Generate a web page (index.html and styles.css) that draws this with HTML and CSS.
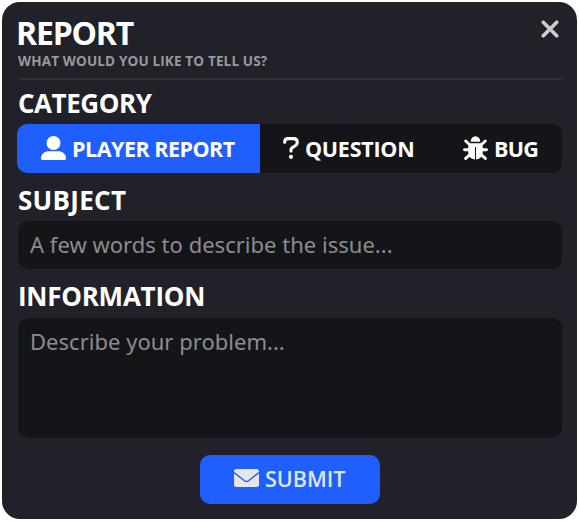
FILE: index.html
```html
<!DOCTYPE html>
<html lang="en">
<head>
<meta charset="utf-8">
<title>Report</title>
<link rel="stylesheet" href="styles.css">
</head>
<body>
<main class="card">
  <header class="header">
    <div>
      <h1 class="title">REPORT</h1>
      <p class="subtitle">WHAT WOULD YOU LIKE TO TELL US?</p>
    </div>
    <button class="close" aria-label="Close"><svg width="18" height="18" viewBox="0 0 18 18"><path d="M2.3 2.3L15.7 15.7M15.7 2.3L2.3 15.7" fill="none" stroke="#ccc" stroke-width="3.7" stroke-linecap="round"/></svg></button>
  </header>
  <h2 class="label category">CATEGORY</h2>
  <div class="tabs">
    <button class="tab active"><svg width="25" height="24" viewBox="0 0 25 24"><circle cx="12.5" cy="7" r="7" fill="#fff"/><path d="M0 22.5C0 18 3.5 15.3 8 15.3H17C21.5 15.3 25 18 25 22.5Q25 24 23.5 24H1.5Q0 24 0 22.5Z" fill="#fff"/></svg><span>PLAYER REPORT</span></button>
    <button class="tab question"><svg width="16" height="22" viewBox="0 0 16 22"><path d="M1.7 5.3V4.8Q1.7 1.6 5 1.6H10.5Q14.3 1.6 14.3 5.2Q14.3 7.5 12.3 8.8L9.3 10.6Q8 11.4 8 13V14" fill="none" stroke="#fff" stroke-width="3.1" stroke-linecap="round"/><circle cx="8" cy="19.8" r="2.1" fill="#fff"/></svg><span>QUESTION</span></button>
    <button class="tab bug"><svg width="25" height="24" viewBox="0 0 25 24"><path d="M7.7 5.8a4.8 5.6 0 0 1 9.6 0zM6 7.2H19Q19.8 9 19.8 12V16Q19.8 23 13 23.5V11H12V23.5Q5.2 23 5.2 16V12Q5.2 9 6 7.2Z" fill="#fff"/><path d="M2.7 5L7 9M22.3 5L18 9M1.5 13.8H7M23.5 13.8H18M2.7 22.4L7.5 18M22.3 22.4L17.5 18" stroke="#fff" stroke-width="2.9" stroke-linecap="round"/></svg><span>BUG</span></button>
  </div>
  <h2 class="label subject">SUBJECT</h2>
  <div class="field">A few words to describe the issue...</div>
  <h2 class="label info">INFORMATION</h2>
  <div class="field area">Describe your problem...</div>
  <button class="submit"><svg width="25" height="18" viewBox="0 0 25 18"><rect width="25" height="18" rx="2.5" fill="#e6e6e6"/><path d="M0 3.5L10.5 11.7Q12.5 13.2 14.5 11.7L25 3.5" fill="none" stroke="#1f5eff" stroke-width="1.4"/></svg><span>SUBMIT</span></button>
</main>
</body>
</html>
```
FILE: styles.css
```css
* { box-sizing: border-box; margin: 0; }
body { background: #fff; padding: 2px; font-family: "Open Sans", "Noto Sans", sans-serif; color: #fff; }
span { white-space: nowrap; }
svg { display: block; flex: none; }
button { border: 0; padding: 0; background: none; font: inherit; color: inherit; }
.card { width: 575px; height: 517px; padding: 14px 15px 0 16px; border-radius: 18px; background: #212129; }
.header { display: flex; justify-content: space-between; height: 64px; border-bottom: 2px solid #303038; }
.title { height: 34px; font-size: 32px; line-height: 33px; letter-spacing: -1.2px; margin-left: -2px; }
.subtitle { font-size: 13.5px; line-height: 22px; font-weight: 700; letter-spacing: 0.16px; color: #999; }
.close { align-self: flex-start; margin: 4px 3px 0 0; }
.label { font-size: 26px; line-height: 46px; height: 44px; font-weight: 700; letter-spacing: -0.45px; }
.tabs { display: flex; height: 49px; margin-left: -1px; border-radius: 10px; background: #141519; overflow: hidden; }
.tab { display: flex; align-items: center; gap: 6px; font-size: 21.5px; font-weight: 700; line-height: 49px; letter-spacing: -0.5px; }
.tab svg { margin-bottom: 1px; }
.active { width: 243px; padding-left: 24px; background: #1f5eff; }
.question { width: 180px; padding-left: 23px; letter-spacing: -0.25px; }
.bug { padding-left: 23px; letter-spacing: -0.7px; }
.subject { height: 48px; line-height: 55px; letter-spacing: 0.3px; }
.field { height: 48px; padding-left: 12px; border-radius: 10px; background: #141519; color: #8c8c90; font-family: "Noto Sans", sans-serif; font-size: 22px; line-height: 47px; letter-spacing: 0.02px; }
.info { height: 49px; line-height: 54px; letter-spacing: -0.25px; }
.area { height: 120px; }
.submit { display: flex; align-items: center; gap: 6px; width: 180px; height: 49px; margin: 17px 0 0 182px; padding-left: 34px; border-radius: 10px; background: #1f5eff; color: #e0e5f5; font-size: 21.5px; font-weight: 600; line-height: 47px; letter-spacing: 0; }
.submit span { margin-top: -2px; }
.submit svg { margin-bottom: 4px; }
```
